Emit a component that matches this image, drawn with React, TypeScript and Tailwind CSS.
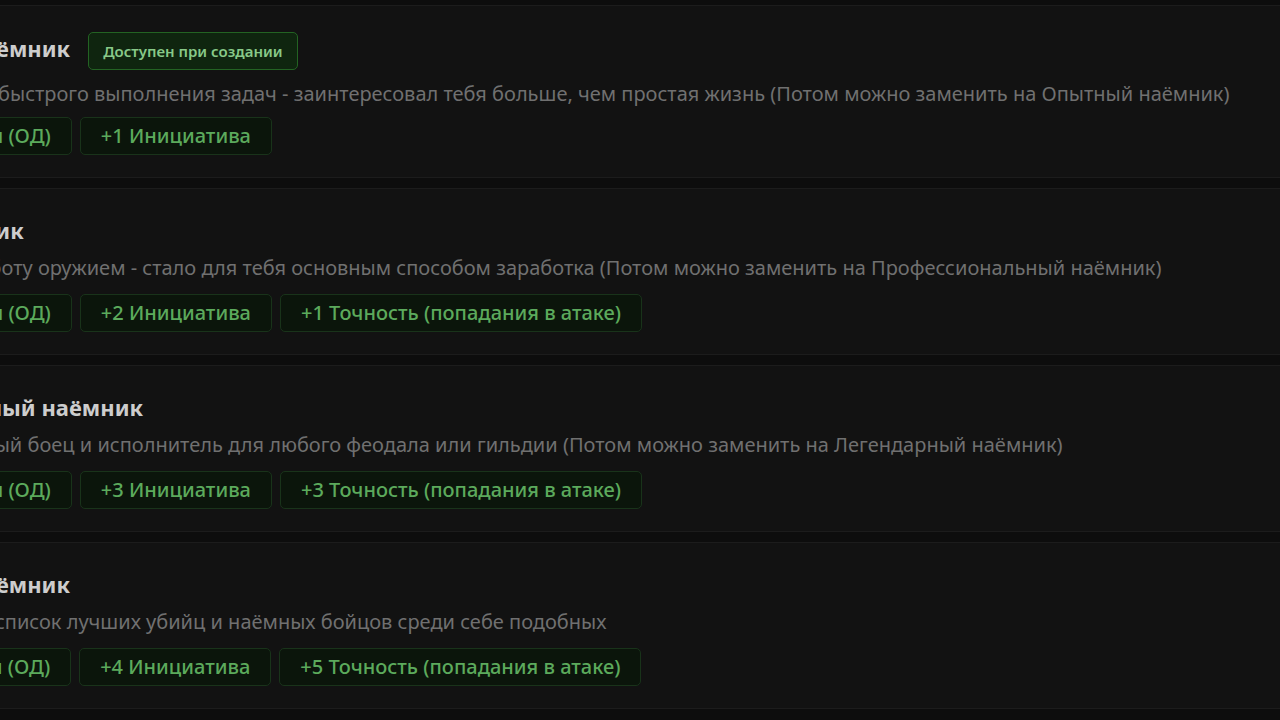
import React from "react";

type Merc = {
  title: string;
  badge?: string;
  description: string;
  bonuses: string[];
};

const mercs: Merc[] = [
  {
    title: "Начинающий наёмник",
    badge: "Доступен при создании",
    description:
      "Заработок - за счёт быстрого выполнения задач - заинтересовал тебя больше, чем простая жизнь (Потом можно заменить на Опытный наёмник)",
    bonuses: ["+1 Очко действия (ОД)", "+1 Инициатива"],
  },
  {
    title: "Опытный наёмник",
    description:
      "Делать грязную работу оружием - стало для тебя основным способом заработка (Потом можно заменить на Профессиональный наёмник)",
    bonuses: [
      "+1 Очко действия (ОД)",
      "+2 Инициатива",
      "+1 Точность (попадания в атаке)",
    ],
  },
  {
    title: "Профессиональный наёмник",
    description:
      "Теперь ты - надёжный боец и исполнитель для любого феодала или гильдии (Потом можно заменить на Легендарный наёмник)",
    bonuses: [
      "+1 Очко действия (ОД)",
      "+3 Инициатива",
      "+3 Точность (попадания в атаке)",
    ],
  },
  {
    title: "Легендарный наёмник",
    description:
      "Теперь ты вошёл в список лучших убийц и наёмных бойцов среди себе подобных",
    bonuses: [
      "+2 Очка действия (ОД)",
      "+4 Инициатива",
      "+5 Точность (попадания в атаке)",
    ],
  },
];

const MercCard: React.FC<{ merc: Merc }> = ({ merc }) => {
  const first = !!merc.badge;
  return (
    <div
      className={
        "bg-[#121212] border-y border-[#1c1c1c] pl-6 pb-[22px] " +
        (first ? "pt-[26px]" : "pt-[27px]")
      }
    >
      <div className="flex items-baseline gap-[18px] min-h-[28px]">
        <h3 className="text-[22px] leading-[28px] font-bold text-[#cdcdcd] whitespace-nowrap">
          {merc.title}
        </h3>
        {merc.badge && (
          <span className="h-[38px] flex items-center px-[14px] rounded-[5px] bg-[#0f250f] border border-[#236323] text-[15px] font-semibold text-[#88c988] whitespace-nowrap">
            {merc.badge}
          </span>
        )}
      </div>
      <p className="mt-[11px] text-[20px] leading-[26px] text-[#707070] whitespace-nowrap">
        {merc.description}
      </p>
      <div className={"flex gap-2 " + (first ? "mt-[10px]" : "mt-[13px]")}>
        {merc.bonuses.map((b) => (
          <span
            key={b}
            className="h-[38px] flex items-center px-5 rounded-[5px] bg-[#0b150b] border border-[#19331a] text-[20px] font-medium text-[#5caa5c] whitespace-nowrap"
          >
            {b}
          </span>
        ))}
      </div>
    </div>
  );
};

export default function App() {
  return (
    <div
      className="w-[1280px] h-[720px] overflow-hidden bg-[#0d0d0d]"
      style={{ fontFamily: '"Noto Sans", "Open Sans", sans-serif' }}
    >
      <div className="-ml-[217px] w-[1600px] flex flex-col gap-[10px] -mt-[16px]">
        <div className="h-[11px] bg-[#121212] border-b border-[#1c1c1c]" />
        {mercs.map((m) => (
          <MercCard key={m.title} merc={m} />
        ))}
      </div>
    </div>
  );
}
